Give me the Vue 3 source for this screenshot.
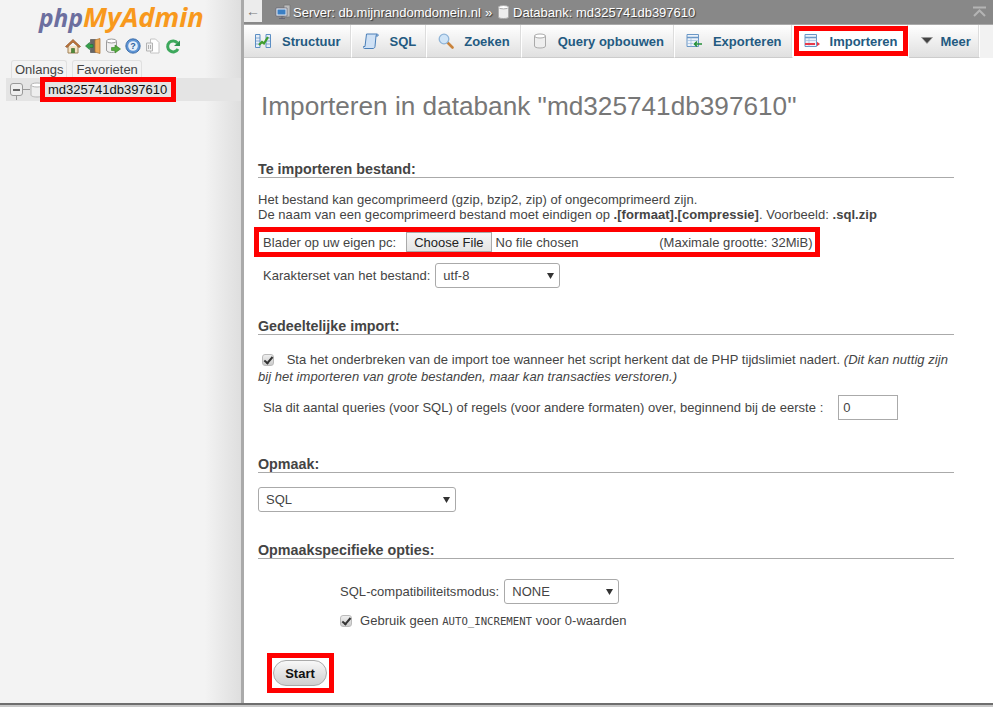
<template>
  <div class="page">
    <aside class="nav">
      <div class="logo"><span class="php">php</span><span class="mya">MyAdmin</span></div>
      <div class="nav-icons">
        <svg width="16" height="16" viewBox="0 0 16 16">
          <path d="M3 8v7h10V8" fill="#f4e3c4" stroke="#a08056" />
          <path d="M6.500 15v-4.500h3V15" fill="#4f8a3a" stroke="#3a6428" stroke-width=".6" />
          <path d="M.5 8.500 8 1.500l7.500 7-1.500 1L8 4 2 9.500z" fill="#c0763a" stroke="#8a5226" stroke-width=".7" />
        </svg>
        <svg width="16" height="16" viewBox="0 0 16 16">
          <path d="M5.500 1.500h5v13h-5z" fill="#666" stroke="#444" stroke-width=".6" />
          <path d="M10 2l5-1.500v15L10 14z" fill="#eeaa58" stroke="#a86f2c" stroke-width=".7" />
          <path d="M.5 8 4.500 4.500v2H8v3H4.500v2z" fill="#34a04a" stroke="#1f7030" stroke-width=".6" />
        </svg>
        <svg width="16" height="16" viewBox="0 0 16 16">
          <path d="M1.500 3v9c0 1.500 2 2.500 5 2.500s5-1 5-2.500V3z" fill="#f1f1f1" stroke="#9b9b9b" />
          <ellipse cx="6.500" cy="3" rx="5" ry="2" fill="#fff" stroke="#9b9b9b" />
          <path d="M6.500 9.500H10V7l5.500 4-5.500 4v-2.500H6.500z" fill="#52ad3c" stroke="#357d26" stroke-width=".6" />
        </svg>
        <svg width="16" height="16" viewBox="0 0 16 16">
          <circle cx="8" cy="8" r="7.200" fill="#5d94d4" stroke="#2c5f9e" stroke-width=".8" />
          <circle cx="8" cy="8" r="4.800" fill="#e6eff9" />
          <text x="8" y="11.300" text-anchor="middle" class="qm">?</text>
        </svg>
        <svg width="16" height="16" viewBox="0 0 16 16">
          <path d="M5.500 1h5l3.500 3.500V15h-8.500z" fill="#fff" stroke="#c4c4c4" />
          <path d="M1.500 5h6v8h-6z" fill="#f0f0f0" stroke="#b3b3b3" />
          <path d="M3.500 7v4M5.500 7v4" stroke="#b0b0b0" />
        </svg>
        <svg width="16" height="16" viewBox="0 0 16 16">
          <path d="M12.500 5A5.500 5.500 0 1 0 13 11" fill="none" stroke="#3da85c" stroke-width="3" />
          <path d="M9 8h6V2.500z" fill="#2f9450" />
        </svg>
      </div>
      <div class="nav-tabs">
        <span class="nav-tab">Onlangs</span>
        <span class="nav-tab">Favorieten</span>
      </div>
      <div class="tree-row">
        <span class="expander"></span>
        <span class="tree-line"></span>
        <svg class="tree-db" width="14" height="16" viewBox="0 0 14 16">
          <path d="M1 3v10c0 1.200 2.500 2 6 2s6-.8 6-2V3z" fill="#eee" stroke="#b5b5b5" />
          <ellipse cx="7" cy="3" rx="6" ry="2" fill="#fff" stroke="#b5b5b5" />
        </svg>
        <span class="db-name">md325741db397610</span>
      </div>
    </aside>
    <div class="splitter"></div>
    <main class="main">
      <div class="crumbs">
        <span class="back">←</span>
        <svg class="srv" width="16" height="16" viewBox="0 0 16 16">
          <path d="M9 1h6v12H9z" fill="#bbb" stroke="#777" stroke-width=".7" />
          <path d="M1 4h11v8H1z" fill="#dfe6ee" stroke="#667" stroke-width=".7" />
          <path d="M2.500 5.500h8v5h-8z" fill="#3b7fc4" />
          <path d="M4 14.500h6M7 12v2.500" stroke="#667" />
        </svg>
        <span class="crumb">Server: db.mijnrandomdomein.nl</span>
        <span class="crumb sep">»</span>
        <svg class="crumb-db" width="11" height="14" viewBox="0 0 11 14">
          <path d="M.5 2v10c0 1 2 1.500 5 1.500s5-.5 5-1.500V2z" fill="#eee" stroke="#aaa" />
          <ellipse cx="5.500" cy="2.200" rx="5" ry="1.700" fill="#fff" stroke="#aaa" />
        </svg>
        <span class="crumb">Databank: md325741db397610</span>
        <svg class="collapse" width="13" height="13" viewBox="0 0 13 13">
          <path d="M0 1.500h13M1 10l5.500-5.500L12 10" fill="none" stroke="#b4b4b4" stroke-width="2" />
        </svg>
      </div>
      <nav class="tabs">
        <a class="tab">
          <svg width="16" height="16" viewBox="0 0 16 16">
            <path d="M.5 1.500h4.500v13H.5zM11 1.500h4.500v13H11z" fill="#e6eef8" stroke="#5c8fc4" />
            <path d="M.5 5h4.500M.5 8h4.500M.5 11h4.500M11 5h4.500M11 8h4.500M11 11h4.500" stroke="#5c8fc4" stroke-width=".7" />
            <path d="M4 12l3-3 2 1.500L13 4" fill="none" stroke="#3f9e2e" stroke-width="2.200" />
          </svg>
          <span>Structuur</span>
        </a>
        <a class="tab">
          <svg width="16" height="16" viewBox="0 0 16 16">
            <path d="M3.500 1h10.500c1 0 1.500 1 1 2h-2l-1 10.500c0 1-1 2-2 2H1.500c-1 0-1.500-1-1-2h1.500z" fill="#cfe1f5" stroke="#4a7fb8" />
            <path d="M13 3c.3-1 .5-1.500 1-2" fill="none" stroke="#4a7fb8" />
          </svg>
          <span>SQL</span>
        </a>
        <a class="tab tab-search">
          <svg width="16" height="16" viewBox="0 0 16 16">
            <path d="M9.500 9.500l5 5" stroke="#c9833b" stroke-width="2.600" stroke-linecap="round" />
            <circle cx="6" cy="6" r="4.800" fill="#cfe4f7" stroke="#8fb4d8" stroke-width="1.300" />
          </svg>
          <span>Zoeken</span>
        </a>
        <a class="tab">
          <svg width="14" height="16" viewBox="0 0 14 16">
            <path d="M1.500 3v10c0 1.200 2.200 2 5.500 2s5.500-.8 5.500-2V3z" fill="#eee" stroke="#aaa" />
            <ellipse cx="7" cy="3" rx="5.500" ry="2" fill="#fff" stroke="#aaa" />
          </svg>
          <span>Query opbouwen</span>
        </a>
        <a class="tab">
          <svg width="16" height="16" viewBox="0 0 16 16">
            <path d="M1 1.500h11.500v12H1z" fill="#edf3fa" stroke="#6a97c6" />
            <path d="M1 4.500h11.500" stroke="#6a97c6" stroke-width="1.500" />
            <path d="M1 7.500h11.500M1 10.500h6M5 4.500v9" stroke="#9dbcdc" stroke-width=".7" />
            <path d="M16 11H9M11 8.500 8.500 11l2.500 2.500" fill="none" stroke="#24903a" stroke-width="1.600" />
          </svg>
          <span>Exporteren</span>
        </a>
        <a class="tab active">
          <svg width="16" height="16" viewBox="0 0 16 16">
            <path d="M1 1.500h11.500v12H1z" fill="#edf3fa" stroke="#6a97c6" />
            <path d="M1 4.500h11.500" stroke="#6a97c6" stroke-width="1.500" />
            <path d="M1 7.500h11.500M5 4.500v9" stroke="#9dbcdc" stroke-width=".7" />
            <path d="M1 11h10" stroke="#e83a4a" stroke-width="2" />
            <path d="M13 8.800 16 11l-3 2.200z" fill="#e83a4a" />
          </svg>
          <span>Importeren</span>
        </a>
        <a class="tab more">
          <svg width="16" height="16" viewBox="0 0 16 16">
            <path d="M1.500 4.500h11L7 10.500z" fill="#444" stroke="#999" stroke-width=".7" />
          </svg>
          <span>Meer</span>
        </a>
      </nav>
      <div class="content">
        <h2 class="title">Importeren in databank "md325741db397610"</h2>

        <section class="sect first">
          <h3>Te importeren bestand:</h3>
          <p class="note">
            Het bestand kan gecomprimeerd (gzip, bzip2, zip) of ongecomprimeerd zijn.<br />
            De naam van een gecomprimeerd bestand moet eindigen op <b>.[formaat].[compressie]</b>. Voorbeeld: <b>.sql.zip</b>
          </p>
          <div class="upload">
            <label>Blader op uw eigen pc:</label>
            <input class="file" type="file" />
            <span>(Maximale grootte: 32MiB)</span>
          </div>
          <div class="charset">
            <label>Karakterset van het bestand:</label>
            <select class="sel sel-charset"><option>utf-8</option></select>
          </div>
        </section>

        <section class="sect partial">
          <h3>Gedeeltelijke import:</h3>
          <p class="allow">
            <input class="check" type="checkbox" checked />
            Sta het onderbreken van de import toe wanneer het script herkent dat de PHP tijdslimiet nadert.
            <i>(Dit kan nuttig zijn</i><br />
            <i>bij het importeren van grote bestanden, maar kan transacties verstoren.)</i>
          </p>
          <div class="skip">
            <label>Sla dit aantal queries (voor SQL) of regels (voor andere formaten) over, beginnend bij de eerste :</label>
            <input class="num" type="text" value="0" />
          </div>
        </section>

        <section class="sect format">
          <h3>Opmaak:</h3>
          <select class="sel sel-format"><option>SQL</option></select>
        </section>

        <section class="sect options">
          <h3>Opmaakspecifieke opties:</h3>
          <div class="compat">
            <label>SQL-compatibiliteitsmodus:</label>
            <select class="sel sel-compat"><option>NONE</option></select>
          </div>
          <div class="auto">
            <input class="check" type="checkbox" checked />
            <span>Gebruik geen <code>AUTO_INCREMENT</code> voor 0-waarden</span>
          </div>
        </section>

        <div class="start-wrap">
          <button class="start" type="button">Start</button>
        </div>
      </div>
    </main>
  </div>
</template>

<script setup>
</script>

<style>
html, body {
  margin: 0;
  overflow: hidden;
  background: #fff;
}
</style>

<style scoped>
.page {
  position: relative;
  display: flex;
  width: 993px;
  height: 707px;
  overflow: hidden;
  font-family: "Liberation Sans", Arial, sans-serif;
  font-size: 13px;
  color: #444;
  background: #fff;
}
.page::after {
  content: "";
  position: absolute;
  left: 0;
  right: 0;
  bottom: 0;
  height: 4px;
  background: linear-gradient(#6e6e6e 0 2px, #c8c8c8 2px 100%);
}

/* left panel */
.nav {
  width: 241px;
  flex: none;
  background: linear-gradient(90deg, #f3f3f3 85%, #dedede 100%);
}
.logo {
  height: 35px;
  padding-left: 39px;
  font-family: "Open Sans", "DejaVu Sans", sans-serif;
  font-weight: 700;
  font-style: italic;
  line-height: 34px;
  white-space: nowrap;
}
.php,
.mya {
  display: inline-block;
  line-height: 34px;
}
.php {
  color: #6c6f9f;
  font-size: 24.5px;
}
.mya {
  color: #f8991d;
  font-size: 27.3px;
}
.nav-icons {
  display: flex;
  justify-content: center;
  gap: 4px;
  padding: 3px 0 0 5px;
  height: 22px;
}
.qm {
  font: bold 9px "Liberation Sans", sans-serif;
  fill: #2c5f9e;
}
.nav-tabs {
  display: flex;
  gap: 5px;
  padding-left: 11px;
  height: 18px;
}
.nav-tab {
  padding: 1px 3px;
  height: 15px;
  line-height: 15px;
  border: 1px solid #e0e0e0;
  border-bottom: none;
  border-radius: 3px 3px 0 0;
}
.tree-row {
  display: flex;
  align-items: center;
  height: 23px;
  margin-left: 6px;
  background: #e4e4e4;
}
.expander {
  position: relative;
  width: 11px;
  height: 11px;
  margin-left: 4px;
  border: 1px solid #999;
  border-radius: 3px;
  background: linear-gradient(#666, #666) center / 7px 2px no-repeat, #eee;
}
.expander::after {
  content: "";
  position: absolute;
  left: 5px;
  top: 12px;
  width: 1px;
  height: 4px;
  background: #999;
}
.tree-line {
  width: 7px;
  height: 1px;
  background: #999;
}
.tree-db {
  flex: none;
}
.db-name {
  position: relative;
  margin-left: 1px;
  padding: 0 4px 0 3px;
  line-height: 15px;
  color: #111;
  background: #e4e4e4;
  outline: 5px solid #f00;
}

.splitter {
  width: 3px;
  flex: none;
  background: #aaa;
}

/* right side */
.main {
  flex: 1;
  min-width: 0;
}
.crumbs {
  display: flex;
  align-items: center;
  height: 24px;
  background: #888;
}
.back {
  width: 18px;
  height: 22px;
  margin-top: -2px;
  line-height: 22px;
  text-align: center;
  font-size: 14px;
  color: #777;
  background: #ececec;
}
.srv {
  margin-left: 13px;
  margin-right: 2px;
}
.crumb {
  color: #fff;
  text-shadow: 1px 1px 1px #333;
}
.sep {
  margin: 0 6px 0 4px;
}
.crumb-db {
  margin-right: 4px;
}
.collapse {
  margin-left: auto;
  margin-right: 7px;
}
.tabs {
  display: flex;
  box-sizing: border-box;
  height: 34px;
  background: #f2f2f2;
  border-top: 1px solid #a9a9a9;
}
.tab {
  position: relative;
  display: flex;
  align-items: center;
  gap: 11px;
  padding: 0 10px 0 11px;
  font-weight: 700;
  color: #235a81;
  background: linear-gradient(#fff, #e0e0e0);
  border-right: 1px solid #fff;
  border-bottom: 1px solid #ccc;
  box-shadow: inset -1px 0 0 #ddd;
}
.tab svg {
  flex: none;
}
.tab-search {
  gap: 10px;
  padding-right: 11px;
}
.tab.active {
  gap: 10px;
  padding-right: 11px;
  background: #fff;
  border-bottom-color: #fff;
}
.tab.active::after {
  content: "";
  position: absolute;
  inset: 1px 0 1px 1px;
  border: 5px solid #f00;
}
.tab.more {
  gap: 4px;
  padding-right: 8px;
}
.content {
  padding-left: 14px;
  width: 696px;
  letter-spacing: 0.04px;
}
.title {
  margin: 0;
  padding: 31px 0 0 3px;
  font-size: 26.2px;
  line-height: 34px;
  font-weight: 400;
  letter-spacing: 0;
  color: #777;
}
.sect h3 {
  margin: 0;
  font-size: 14.3px;
  line-height: 16px;
  letter-spacing: 0;
  color: #444;
  border-bottom: 1px solid #aaa;
}
.sect.first {
  margin-top: 38px;
}
.note {
  margin: 14px 0 0;
  line-height: 15px;
}
.upload {
  display: flex;
  align-items: center;
  width: 556px;
  height: 20px;
  margin: 5px 0 0 -4px;
  border: 5px solid #f00;
}
.upload label {
  margin-left: 4px;
  margin-right: 10px;
}
.file {
  width: 253px;
  font: 13px "Liberation Sans", sans-serif;
  letter-spacing: inherit;
  color: #444;
}
.file::file-selector-button {
  height: 20px;
  margin-right: 4px;
  padding: 0 7px;
  border: 1px solid #aaa;
  background: linear-gradient(#f6f6f6, #e4e4e4);
  color: #222;
  font: 13px "Liberation Sans", sans-serif;
}
.charset {
  display: flex;
  align-items: center;
  gap: 5px;
  margin: 6px 0 0 5px;
}
.sel {
  appearance: none;
  height: 25px;
  padding: 0 4px 0 7px;
  border: 1px solid #aaa;
  border-radius: 3px;
  background: #fff url("data:image/svg+xml,%3Csvg xmlns='http://www.w3.org/2000/svg' width='7' height='6'%3E%3Cpath d='M0 0h7L3.500 6z' fill='%23333'/%3E%3C/svg%3E") no-repeat right 5px center;
  color: #444;
  font: 13px "Liberation Sans", sans-serif;
}
.sel-charset { width: 125px; }
.sel-format { width: 198px; margin-top: 14px; display: block; }
.sel-compat { width: 115px; }
.partial { margin-top: 30px; }
.allow {
  margin: 16px 0 0;
  line-height: 17px;
}
.check {
  appearance: none;
  position: relative;
  width: 12px;
  height: 12px;
  margin: 0 9px 0 4px;
  vertical-align: -2px;
  border: 1px solid #bbb;
  border-radius: 3px;
  background: linear-gradient(#eee, #ccc);
}
.check::after {
  content: "";
  position: absolute;
  left: 3px;
  top: 0;
  width: 3px;
  height: 7px;
  border: solid #333;
  border-width: 0 2px 2px 0;
  transform: rotate(40deg);
}
.skip {
  display: flex;
  align-items: center;
  gap: 15px;
  margin: 10px 0 0 5px;
}
.num {
  width: 60px;
  height: 25px;
  box-sizing: border-box;
  padding: 0 4px;
  border: 1px solid #aaa;
  color: #444;
  font: 13px "Liberation Sans", sans-serif;
}
.format { margin-top: 36px; }
.options { margin-top: 30px; }
.compat {
  display: flex;
  align-items: center;
  gap: 5px;
  margin: 20px 0 0 82px;
}
.auto {
  display: flex;
  align-items: center;
  margin: 9px 0 0 82px;
}
.auto .check {
  margin: 0 8px 0 0;
}
code {
  font-family: "DejaVu Sans Mono", "Liberation Mono", monospace;
  font-size: 10.67px;
  letter-spacing: 0;
}
.start-wrap {
  width: 57px;
  margin: 25px 0 0 9px;
  padding: 2px 0;
  border: 5px solid #f00;
}
.start {
  display: block;
  width: 54px;
  height: 26px;
  margin-left: 1px;
  padding: 0;
  border: 1px solid #aaa;
  border-radius: 13px;
  background: linear-gradient(#f8f8f8, #cfcfcf);
  color: #111;
  font: bold 13px "Liberation Sans", sans-serif;
}
</style>
